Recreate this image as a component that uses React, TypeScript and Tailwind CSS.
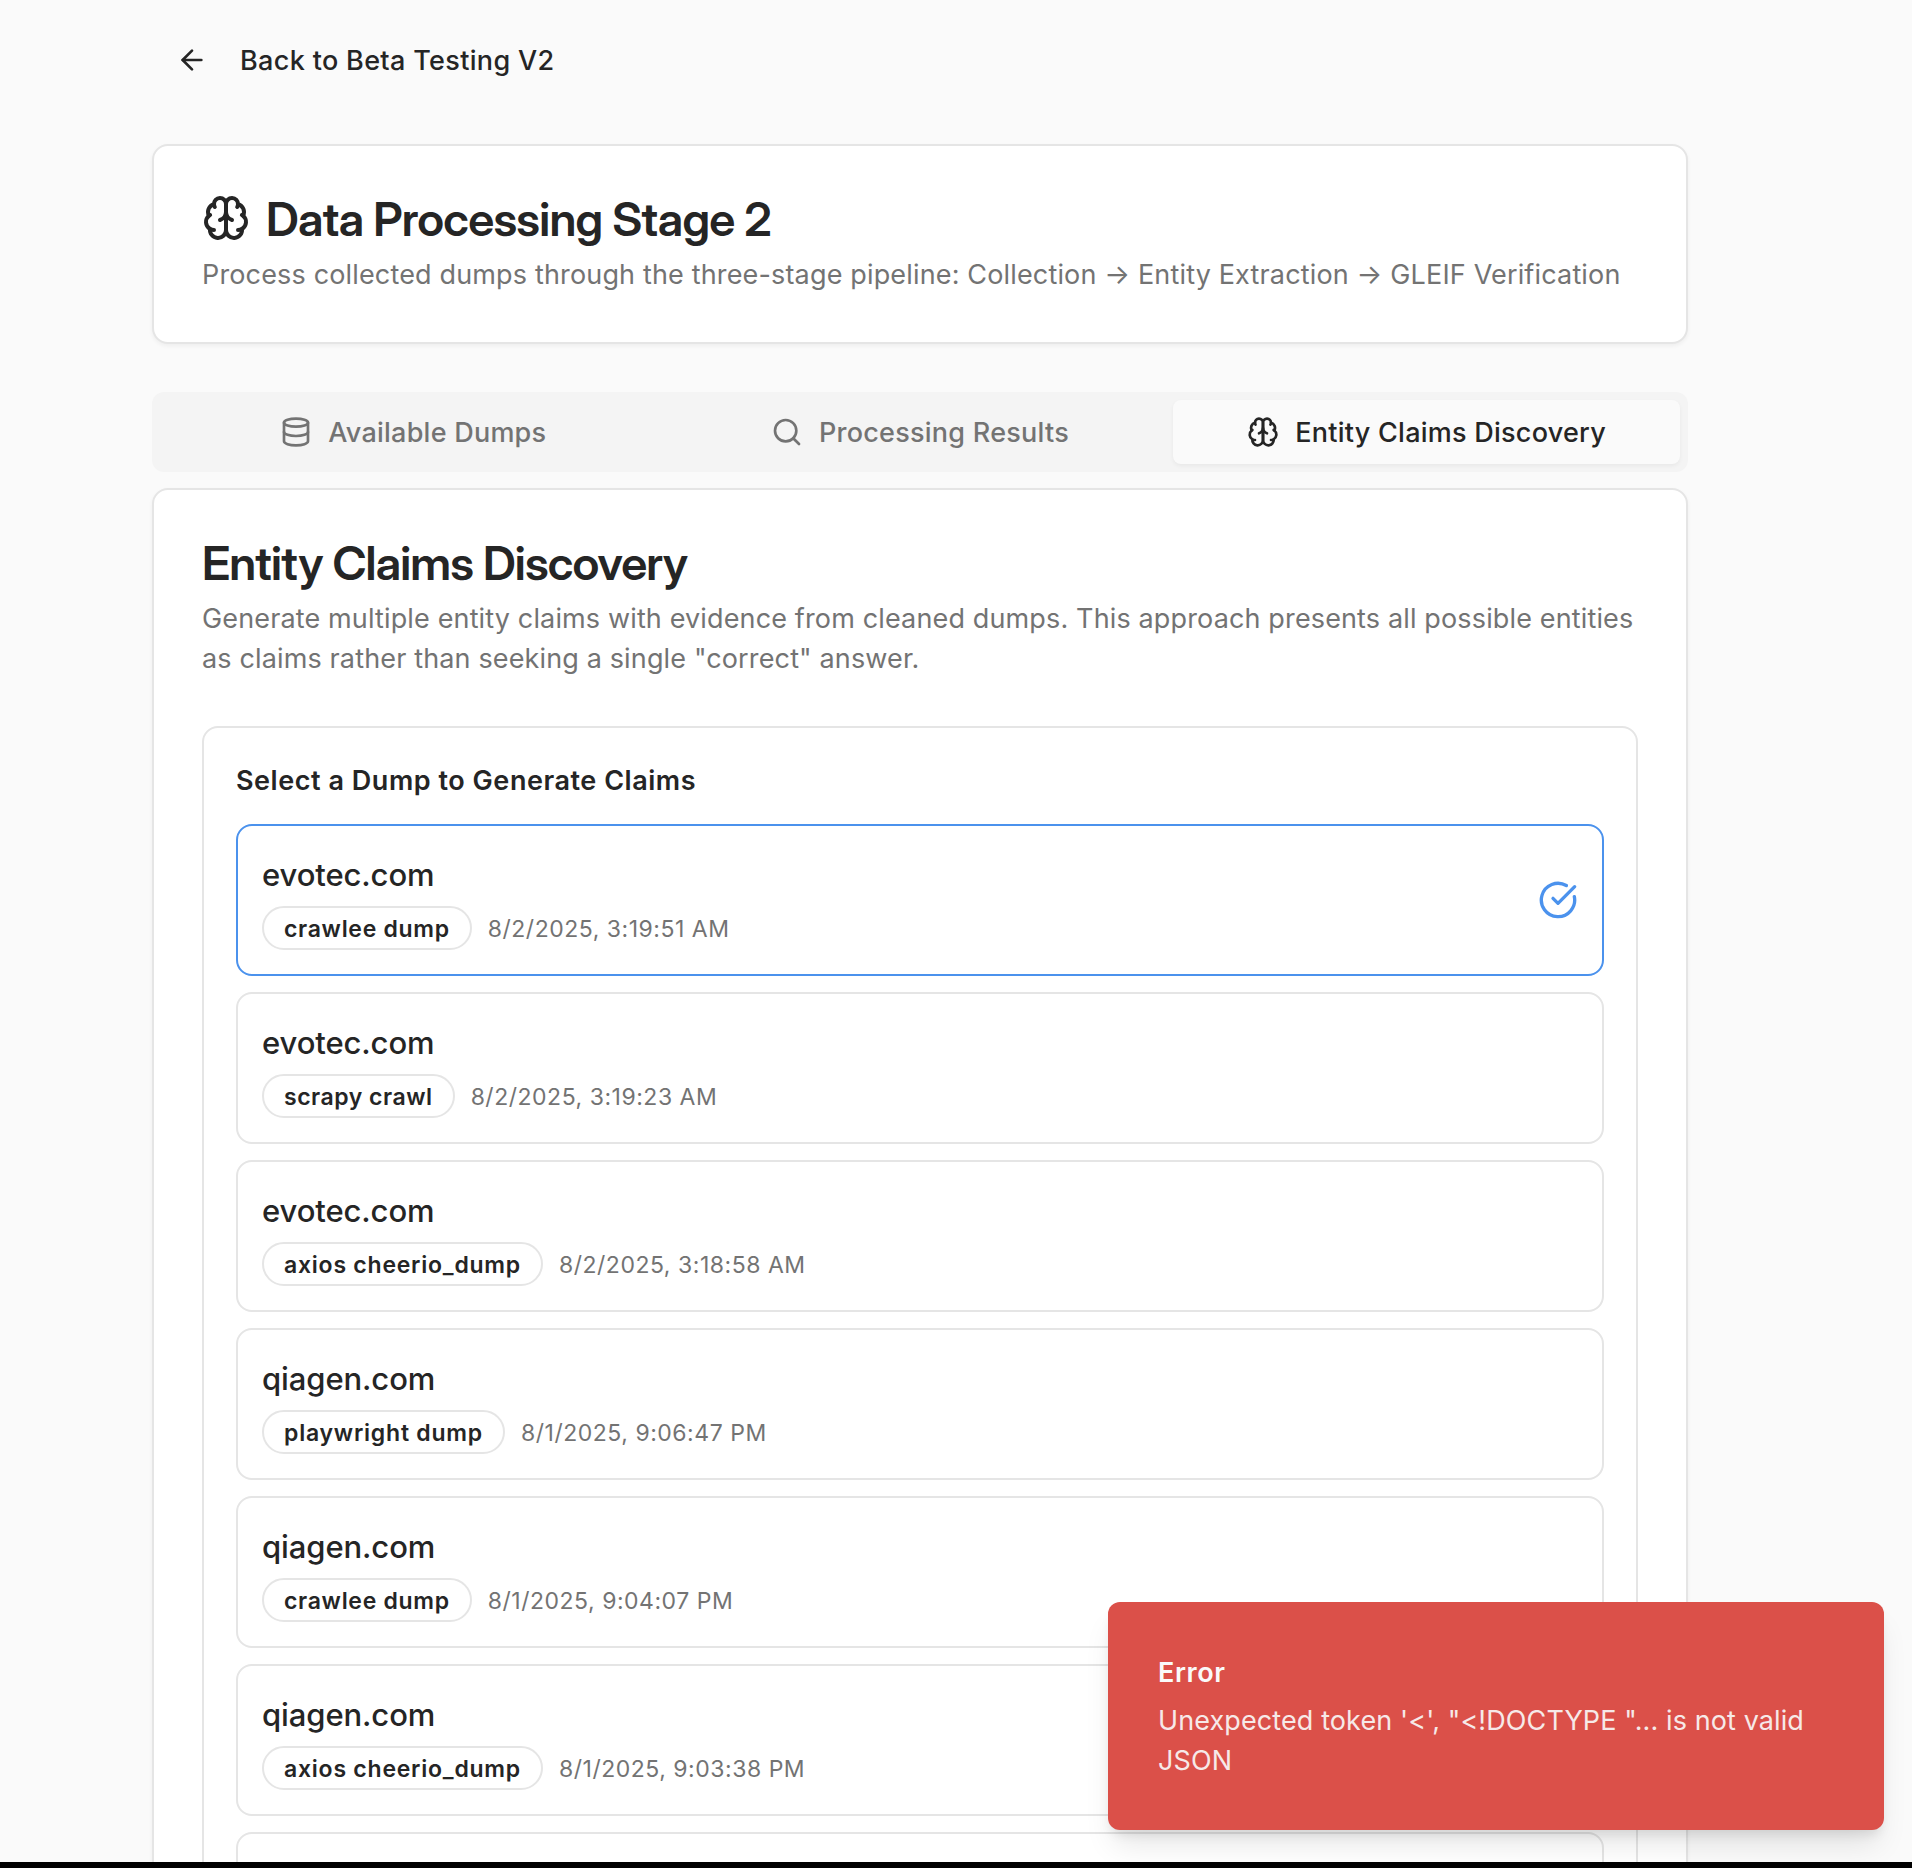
import { ArrowLeft, CircleCheckBig, Database, Search } from 'lucide-react';

const dumps = [
  { site: 'evotec.com', kind: 'crawlee dump', date: '8/2/2025, 3:19:51 AM', selected: true },
  { site: 'evotec.com', kind: 'scrapy crawl', date: '8/2/2025, 3:19:23 AM' },
  { site: 'evotec.com', kind: 'axios cheerio_dump', date: '8/2/2025, 3:18:58 AM' },
  { site: 'qiagen.com', kind: 'playwright dump', date: '8/1/2025, 9:06:47 PM' },
  { site: 'qiagen.com', kind: 'crawlee dump', date: '8/1/2025, 9:04:07 PM' },
  { site: 'qiagen.com', kind: 'axios cheerio_dump', date: '8/1/2025, 9:03:38 PM' },
];

const kindTracking: Record<string, string> = {
  'crawlee dump': 'tracking-[0.7px]',
  'scrapy crawl': 'tracking-[0.53px]',
  'axios cheerio_dump': 'tracking-[0.77px]',
  'playwright dump': 'tracking-[0.78px]',
};

function BrainIcon({ size }: { size: number }) {
  return (
    <svg
      width={size}
      height={size}
      viewBox="0 0 24 24"
      fill="none"
      stroke="currentColor"
      strokeWidth="2"
      strokeLinecap="round"
      strokeLinejoin="round"
      className="shrink-0"
    >
      <path d="M12 5a3 3 0 1 0-5.997.125 4 4 0 0 0-2.526 5.77 4 4 0 0 0 .556 6.588A4 4 0 1 0 12 18Z" />
      <path d="M12 5a3 3 0 1 1 5.997.125 4 4 0 0 1 2.526 5.77 4 4 0 0 1-.556 6.588A4 4 0 1 1 12 18Z" />
      <path d="M15 13a4.5 4.5 0 0 1-3-4 4.5 4.5 0 0 1-3 4" />
      <path d="M17.599 6.5a3 3 0 0 0 .399-1.375" />
      <path d="M6.003 5.125A3 3 0 0 0 6.401 6.5" />
      <path d="M3.477 10.896a4 4 0 0 1 .585-.396" />
      <path d="M19.938 10.5a4 4 0 0 1 .585.396" />
      <path d="M6 18a4 4 0 0 1-1.967-.516" />
      <path d="M19.967 17.484A4 4 0 0 1 18 18" />
    </svg>
  );
}

export default function App() {
  return (
    <div className="flex h-[1868px] w-[1912px] flex-col overflow-hidden bg-black font-['Inter','Liberation_Sans',sans-serif] text-[#252525]">
      <div className="relative h-[1862px] overflow-hidden bg-[#fafafa]">
        <main className="ml-[152px] w-[1536px] pt-5">
          <button className="mb-11 flex h-20 items-center gap-8 px-6 text-[27px] font-medium tracking-[0.34px]">
            <ArrowLeft size={32} />
            <span className="pt-0.5">Back to Beta Testing V2</span>
          </button>

          <section className="h-[200px] rounded-2xl border-2 border-[#e5e5e5] bg-white p-12 shadow-[0_2px_4px_rgba(0,0,0,0.05)]">
            <h1 className="flex h-12 items-center gap-4 font-['Inter_Display','Inter',sans-serif] text-[47px] leading-[48px] font-semibold tracking-[-0.77px] whitespace-nowrap">
              <BrainIcon size={48} />
              <span className="pt-0.5">Data Processing Stage 2</span>
            </h1>
            <p className="mt-[13px] text-[27px] leading-10 tracking-[0.155px] whitespace-nowrap text-[#737373]">
              Process collected dumps through the three-stage pipeline: Collection → Entity Extraction → GLEIF Verification
            </p>
          </section>

          <nav className="mt-12 grid h-20 grid-cols-3 rounded-xl bg-[#f4f4f4] p-2 text-[27px] font-medium text-[#737373]">
            <button className="flex items-center justify-center gap-4 tracking-[0.24px]">
              <Database size={32} />
              <span className="pt-0.5">Available Dumps</span>
            </button>
            <button className="flex items-center justify-center gap-4 tracking-[0.25px]">
              <Search size={32} />
              <span className="pt-0.5">Processing Results</span>
            </button>
            <button className="flex items-center justify-center gap-4 rounded-lg bg-[#fafafa] tracking-[0.25px] text-[#252525] shadow-[0_2px_4px_rgba(0,0,0,0.05)]">
              <BrainIcon size={32} />
              <span className="pt-0.5">Entity Claims Discovery</span>
            </button>
          </nav>

          <section className="mt-4 rounded-2xl border-2 border-[#e5e5e5] bg-white p-12 shadow-[0_2px_4px_rgba(0,0,0,0.05)]">
            <h2 className="font-['Inter_Display','Inter',sans-serif] text-[47px] leading-[50px] font-semibold tracking-[-0.86px]">
              Entity Claims Discovery
            </h2>
            <p className="mt-[11px] text-[27px] leading-10 tracking-[0.14px] whitespace-nowrap text-[#737373]">
              Generate multiple entity claims with evidence from cleaned dumps. This approach presents all possible entities
              <br />
              as claims rather than seeking a single "correct" answer.
            </p>

            <div className="mt-[47px] rounded-2xl border-2 border-[#e5e5e5] p-8">
              <h3 className="pt-px text-[27px] leading-10 font-semibold tracking-[0.54px]">Select a Dump to Generate Claims</h3>
              <ul className="mt-[23px] flex flex-col gap-4">
                {dumps.map((dump) => (
                  <li
                    key={dump.date}
                    className={`flex h-[152px] items-center justify-between rounded-2xl border-2 p-6 ${dump.selected ? 'border-[#4b92ed]' : 'border-[#e5e5e5]'}`}
                  >
                    <div>
                      <div className="text-[31px] leading-[50px] font-medium tracking-[-0.1px]">{dump.site}</div>
                      <div className="mt-1.5 flex items-center gap-4">
                        <span
                          className={`rounded-full border-2 border-[#e5e5e5] px-5 pt-[5px] pb-[3px] text-[23px] leading-8 font-semibold ${kindTracking[dump.kind]}`}
                        >
                          {dump.kind}
                        </span>
                        <span className="pt-0.5 text-[23px] leading-8 tracking-[0.52px] text-[#737373]">{dump.date}</span>
                      </div>
                    </div>
                    {dump.selected && <CircleCheckBig size={40} className="text-[#4b92ed]" />}
                  </li>
                ))}
                <li className="h-[152px] rounded-2xl border-2 border-[#e5e5e5]" />
              </ul>
            </div>
          </section>
        </main>

        <div
          role="alert"
          className="absolute right-7 bottom-8 h-[228px] w-[776px] rounded-xl bg-[#db5049] px-[50px] pt-[51px] text-[27px] leading-10 text-[#fafafa] shadow-[0_20px_30px_-6px_rgba(0,0,0,0.1),0_8px_12px_-4px_rgba(0,0,0,0.1)]"
        >
          <div className="font-semibold tracking-[0.6px]">Error</div>
          <div className="mt-2 tracking-[0.1px] opacity-90">
            Unexpected token '&lt;', "&lt;!DOCTYPE "... is not valid
            <br />
            JSON
          </div>
        </div>
      </div>
    </div>
  );
}
